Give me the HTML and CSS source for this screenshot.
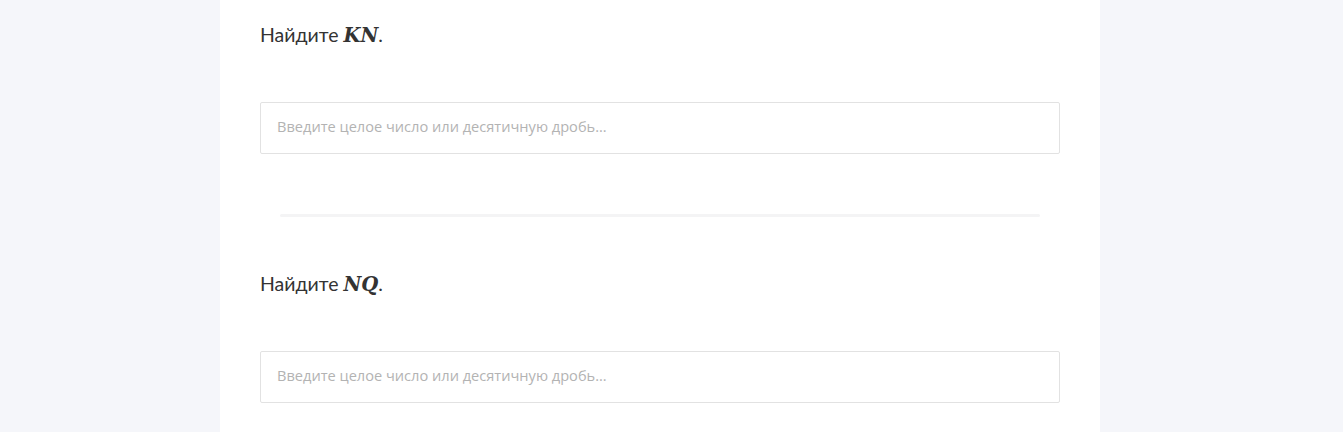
FILE: index.html
```html
<!DOCTYPE html>
<html lang="ru">
<head>
<meta charset="utf-8">
<link rel="stylesheet" href="styles.css">
</head>
<body>
<div class="panel">
  <div class="task">
    <div class="question">Найдите <span class="math">KN</span>.</div>
    <input class="answer" type="text" placeholder="Введите целое число или десятичную дробь...">
  </div>
  <div class="divider"></div>
  <div class="task">
    <div class="question">Найдите <span class="math">NQ</span>.</div>
    <input class="answer" type="text" placeholder="Введите целое число или десятичную дробь...">
  </div>
</div>
</body>
</html>
```

FILE: styles.css
```css
html, body {
  margin: 0;
  padding: 0;
  height: 100%;
}
body {
  background: #f5f6fa;
  overflow: hidden;
}
.panel {
  margin-left: 220px;
  width: 880px;
  min-height: 100%;
  background: #ffffff;
  box-sizing: border-box;
  padding: 21px 40px 0 40px;
}
.task {
  display: flex;
  flex-direction: column;
}
.question {
  font-family: "Lato", "Noto Sans", sans-serif;
  font-size: 19.5px;
  line-height: 28px;
  height: 28px;
  color: #333333;
  margin-bottom: 53px;
}
.math {
  font-family: "DejaVu Serif", "Liberation Serif", serif;
  font-weight: bold;
  font-style: italic;
  font-size: 19.5px;
  line-height: 1;
}
.answer {
  box-sizing: border-box;
  height: 52px;
  width: 100%;
  border: 1px solid #e2e2e2;
  border-radius: 2px;
  padding: 0 16px 4px 16px;
  font-family: "Open Sans", "Noto Sans", sans-serif;
  font-size: 14.6px;
  color: #333;
  outline: none;
}
.answer::placeholder {
  color: #b3b3b3;
}
.divider {
  height: 3px;
  background: #f4f4f5;
  margin: 60px 20px 53px 20px;
  border-radius: 2px;
}
```
